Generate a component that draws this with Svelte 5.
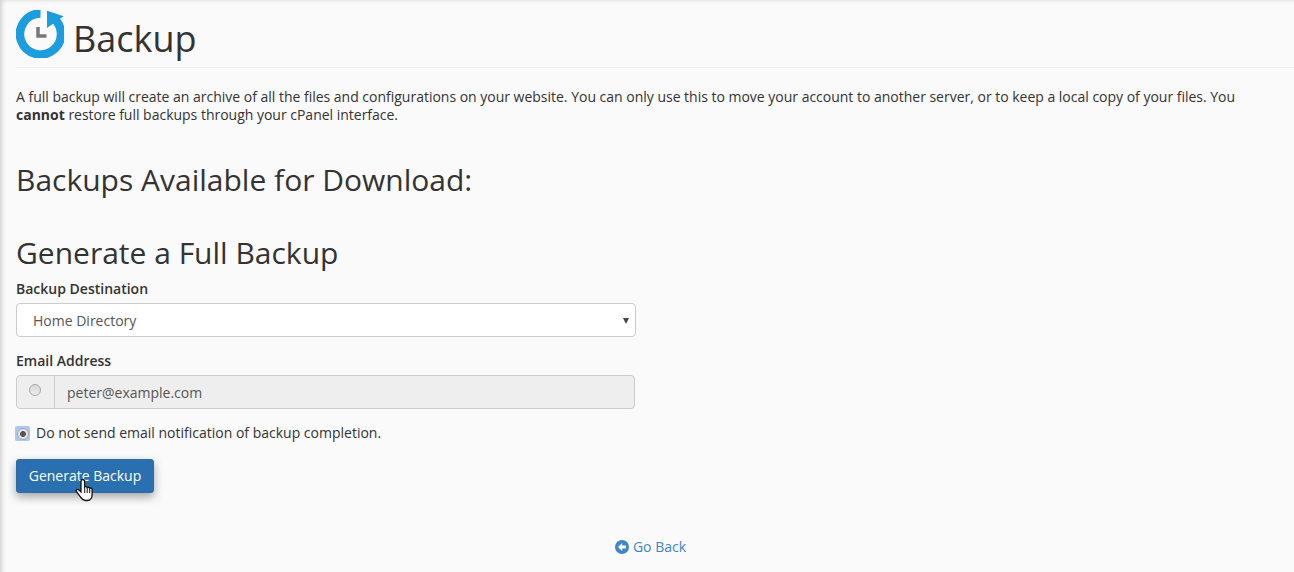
<script>
    let destination = $state('homedir');
    let email = 'peter@example.com';
</script>

<div class="body-content">
    <div class="page-header">
        <svg class="app-icon" viewBox="0 0 48 48" width="48" height="48" aria-hidden="true">
            <path d="M24.5 3.5 A 20.5 20.5 0 1 0 35 6.4" fill="none" stroke="#1b9ddf" stroke-width="8.5"/>
            <path d="M31 0.8 L47.6 6.2 L31 18 Z" fill="#1b9ddf"/>
            <path d="M22 17 V26 H30.5" fill="none" stroke="#777" stroke-width="3.5"/>
        </svg>
        <h1>Backup</h1>
    </div>

    <p class="description">A full backup will create an archive of all the files and configurations on your website. You can only use this to move your account to another server, or to keep a local copy of your files. You <strong>cannot</strong> restore full backups through your cPanel interface.</p>

    <h2 class="available">Backups Available for Download:</h2>

    <h2 class="generate">Generate a Full Backup</h2>

    <div class="form">
        <div class="form-group">
            <label for="dest">Backup Destination</label>
            <div class="select-wrap">
                <select id="dest" bind:value={destination}>
                    <option value="homedir">Home Directory</option>
                </select>
                <span class="caret"></span>
            </div>
        </div>

        <div class="form-group">
            <label for="email">Email Address</label>
            <div class="input-group">
                <span class="addon"><span class="radio"></span></span>
                <input id="email" type="text" value={email} disabled />
            </div>
        </div>

        <div class="no-notify">
            <span class="radio-focus"><span class="radio checked"></span></span>
            <span>Do not send email notification of backup completion.</span>
        </div>

        <div class="button-wrap">
            <button type="button">Generate Backup</button>
            <svg class="cursor" viewBox="0 0 18 24" width="18" height="24" aria-hidden="true">
                <path d="M7.8 1.5 C9 1.5 9.6 2.3 9.6 3.4 V9 C10.3 8.3 11.7 8.5 12.2 9.5 C12.9 8.9 14.3 9.2 14.7 10.2 C15.6 9.7 17 10.2 17.1 11.6 V16.5 C17.1 19.5 15.8 22.5 12.2 22.5 H10.5 C8 22.5 7 21.2 5.6 19.2 L1.3 13.5 C0.6 12.2 2.5 10.6 3.7 11.8 L6 14 V3.4 C6 2.3 6.7 1.5 7.8 1.5 Z" fill="#fff" stroke="#111" stroke-width="1.3"/>
                <path d="M9.7 9.5 V15 M12.2 9.8 V15 M14.7 10.5 V15" fill="none" stroke="#111" stroke-width="1"/>
            </svg>
        </div>
    </div>

    <div class="return-link">
        <a href="#back">
            <svg viewBox="0 0 14 14" width="14" height="14" aria-hidden="true">
                <circle cx="7" cy="7" r="7" fill="#3f86c6"/>
                <path d="M7.2 3 L3 7 L7.2 11 V8.5 H11 V5.5 H7.2 Z" fill="#fff"/>
            </svg>
            Go Back
        </a>
    </div>
</div>

<style>
    :global(body) {
        background: #fafafa;
        font-family: "Open Sans", sans-serif;
        font-size: 14px;
        color: #333;
        overflow: hidden;
    }

    .body-content {
        height: 572px;
        box-sizing: border-box;
        padding: 0 0 0 16px;
        box-shadow: inset 4px 2px 4px -2px rgba(0, 0, 0, 0.16);
        line-height: 18px;
    }

    .page-header {
        display: flex;
        align-items: flex-start;
        gap: 9px;
        height: 58px;
        padding-top: 9px;
        border-bottom: 1px solid #eeeeee;
    }

    .app-icon {
        flex: none;
        margin-top: 1px;
    }

    h1 {
        margin: 8px 0 0;
        font-size: 36px;
        line-height: 44px;
        font-weight: 400;
    }

    .description {
        margin: 20px 0 0;
        width: 1236px;
        line-height: 18px;
        font-size: 14px;
        letter-spacing: -0.011px;
    }

    h2 {
        font-weight: 400;
        font-size: 30px;
        line-height: 40px;
        margin: 0;
    }

    .available {
        margin-top: 36px;
    }

    .generate {
        margin-top: 33px;
    }

    .form {
        width: 620px;
    }

    .form-group {
        margin-bottom: 14px;
    }

    label {
        display: block;
        font-weight: 600;
        line-height: 20px;
        margin-bottom: 4px;
        margin-top: 6px;
    }

    .select-wrap {
        position: relative;
        height: 34px;
    }

    select {
        appearance: none;
        width: 100%;
        height: 34px;
        padding: 2px 16px 0;
        border: 1px solid #ccc;
        border-radius: 4px;
        background: #fff;
        font: inherit;
        color: #555;
    }

    .caret {
        position: absolute;
        right: 7px;
        top: 15px;
        border-left: 3.5px solid transparent;
        border-right: 3.5px solid transparent;
        border-top: 6px solid #444;
    }

    .input-group {
        display: flex;
        height: 34px;
        width: 619px;
        box-sizing: border-box;
        border: 1px solid #ccc;
        border-radius: 4px;
        background: #eee;
    }

    .addon {
        width: 36px;
        flex: none;
        border-right: 1px solid #ccc;
        display: flex;
        justify-content: center;
        padding: 8px 1px 0 0;
        box-sizing: content-box;
    }

    .radio {
        display: block;
        box-sizing: border-box;
        width: 12px;
        height: 12px;
        border-radius: 50%;
        border: 1px solid #a8a8a8;
        background: linear-gradient(#d8d8d8, #ececec);
    }

    input {
        flex: 1;
        min-width: 0;
        border: 0;
        background: transparent;
        padding: 2px 12px 0;
        font: inherit;
        color: #555;
        opacity: 1;
    }

    .no-notify {
        display: flex;
        align-items: center;
        gap: 6px;
        margin-top: 15px;
        margin-left: -1px;
        height: 18px;
    }

    .radio-focus {
        width: 15px;
        height: 15px;
        margin-top: 1px;
        background: #a8c8f8;
        border-radius: 2px;
        display: flex;
        align-items: center;
        justify-content: center;
    }

    .radio.checked {
        background: radial-gradient(circle, #555 0 2.6px, #e4e4e4 3.2px);
        border-color: #a5a5a5;
    }

    .button-wrap {
        position: relative;
        margin-top: 17px;
        width: 138px;
    }

    button {
        display: block;
        width: 138px;
        height: 34px;
        border: 1px solid #2e6da4;
        border-radius: 3px;
        background: #2a6fb0;
        color: #fff;
        font: inherit;
        padding: 0;
        box-shadow: 0 4px 10px rgba(0, 0, 0, 0.35);
    }

    .cursor {
        position: absolute;
        left: 59px;
        top: 19px;
    }

    .return-link {
        margin-top: 45px;
        width: 1269px;
        text-align: center;
    }

    .return-link a {
        color: #3f86c6;
        text-decoration: none;
        display: inline-flex;
        align-items: center;
        gap: 4px;
    }
</style>
